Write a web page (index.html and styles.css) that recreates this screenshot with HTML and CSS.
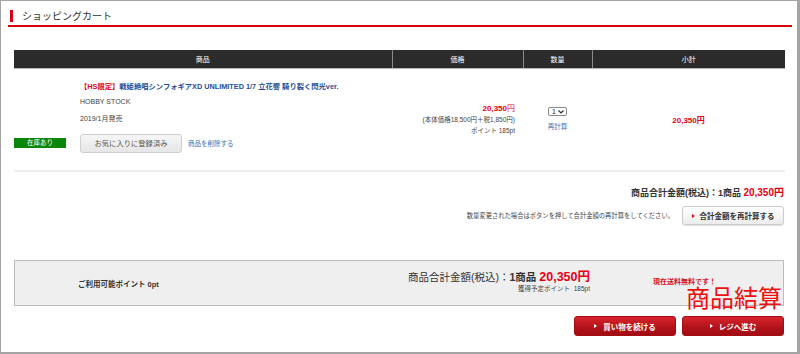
FILE: index.html
```html
<!doctype html>
<html lang="ja">
  <head>
    <meta charset="UTF-8" />
    <meta name="viewport" content="width=device-width, initial-scale=1.0" />
    <title>ショッピングカート</title>
    <link rel="stylesheet" href="styles.css">
  </head>
  <body>
    <div class="cart">
      <h2 class="cart-title">ショッピングカート</h2>

      <table class="cart-table">
        <thead>
          <tr>
            <th class="col-item">商品</th>
            <th class="col-price">価格</th>
            <th class="col-qty">数量</th>
            <th class="col-sub">小計</th>
          </tr>
        </thead>
        <tbody>
          <tr>
            <td class="item">
              <div class="item-grid">
                <a class="item-name" href="#"><span class="tag">【HS限定】</span>戦姫絶唱シンフォギアXD UNLIMITED 1/7 立花響 騎り裂く閃光ver.</a>
                <span class="item-maker">HOBBY STOCK</span>
                <span class="item-date">2019/1月発売</span>
                <span class="stock">在庫あり</span>
                <div class="item-actions">
                  <span class="fav-button">お気に入りに登録済み</span>
                  <a class="link" href="#">商品を削除する</a>
                </div>
              </div>
            </td>
            <td class="price">
              <div class="price-main">20,350<span class="yen">円</span></div>
              <div>(本体価格18,500円＋税1,850円)</div>
              <div>ポイント 185pt</div>
            </td>
            <td class="qty">
              <span class="qty-select">1 <svg width="6" height="4" viewBox="0 0 6 4"><path d="M0.5 0.5 L3 3 L5.5 0.5" fill="none" stroke="#333" stroke-width="1.2"/></svg></span>
              <a class="link" href="#">再計算</a>
            </td>
            <td class="subtotal">20,350円</td>
          </tr>
        </tbody>
      </table>

      <div class="totals">
        <div class="total-line">商品合計金額(税込)：1商品 <span class="amount">20,350円</span></div>
        <div class="recalc-line">
          <span class="recalc-note">数量変更された場合はボタンを押して合計金額の再計算をしてください。</span>
          <span class="recalc-button"><i class="arrow"></i>合計金額を再計算する</span>
        </div>
      </div>

      <div class="summary">
        <div class="summary-points">ご利用可能ポイント 0pt</div>
        <div class="summary-total">
          <div class="summary-amount">商品合計金額(税込)：<b>1商品</b> <span class="amount">20,350円</span></div>
          <div class="summary-earn">獲得予定ポイント&nbsp;&nbsp;185pt</div>
        </div>
        <div class="summary-ship">現在送料無料です！</div>
        <span class="note">商品結算</span>
      </div>

      <div class="actions">
        <a class="red-button" href="#"><i class="arrow"></i>買い物を続ける</a>
        <a class="red-button" href="#"><i class="arrow"></i>レジへ進む</a>
      </div>
    </div>
  </body>
</html>
```
FILE: styles.css
```css
* {
  margin: 0;
  padding: 0;
  box-sizing: border-box;
}
body {
  font-family: "Liberation Sans", "Noto Sans CJK JP", sans-serif;
  color: #333;
  background: #fff;
}
a {
  text-decoration: none;
}
.cart {
  position: relative;
  width: 800px;
  height: 354px;
  border: 1px solid #a4a4a4;
  border-right-width: 3px;
  border-bottom-width: 2px;
}
.cart-title {
  margin: 0 5px 0 7px;
  padding: 8px 0 1px 14px;
  line-height: 15px;
  font-size: 10px;
  font-weight: normal;
  color: #333;
  border-bottom: 2px solid #d7000f;
  position: relative;
}
.cart-title::before {
  content: "";
  position: absolute;
  left: 2px;
  top: 9px;
  width: 3px;
  height: 12px;
  background: #d7000f;
}

/* カート表 */
.cart-table {
  margin: 23px 0 0 13px;
  width: 771px;
  border-collapse: collapse;
  font-size: 7px;
}
.cart-table th {
  height: 18px;
  background: #2b2b2b;
  color: #fff;
  font-weight: normal;
  border-left: 1px solid #8a8a8a;
  border-bottom: 1px solid #b5b5b5;
}
.cart-table th:first-child {
  border-left: none;
}
.col-item { width: 378px; }
.col-price { width: 131px; }
.col-qty { width: 69px; }
.col-sub { width: 193px; }
.cart-table td {
  height: 103px;
  vertical-align: middle;
  border-bottom: 2px solid #eeeeee;
}
.cart-table td.item {
  vertical-align: top;
  padding: 9px 0 0;
}
.item-grid {
  display: grid;
  grid-template-columns: 66px 1fr;
  grid-template-rows: 16px 16px 16px auto;
  align-items: center;
}
.item-name,
.item-maker,
.item-date {
  grid-column: 2;
}
.item-name {
  color: #1f4f98;
  font-weight: bold;
  font-size: 7.3px;
}
.item-name .tag {
  color: #e60012;
}
.item-maker,
.item-date {
  font-size: 7px;
  color: #444;
}
.stock {
  grid-column: 1;
  grid-row: 4;
  margin-top: 8px;
  width: 52px;
  height: 10px;
  line-height: 10px;
  background: #0a860a;
  color: #fff;
  text-align: center;
  font-size: 6.5px;
}
.item-actions {
  grid-column: 2;
  grid-row: 4;
  margin-top: 8px;
  display: flex;
  align-items: center;
  gap: 6px;
}
.fav-button {
  width: 102px;
  height: 19px;
  line-height: 17px;
  text-align: center;
  font-size: 7.3px;
  color: #555;
  border: 1px solid #cfcfcf;
  border-radius: 3px;
  background: linear-gradient(#f6f6f6, #e6e6e6);
}
.link {
  color: #3a6fb0;
  font-size: 6.5px;
}
.price {
  text-align: right;
  padding-right: 8px;
  line-height: 11px;
  font-size: 6.5px;
  color: #444;
}
.price-main {
  color: #e60012;
  font-weight: bold;
  font-size: 8px;
}
.price-main .yen {
  font-weight: normal;
}
.qty {
  text-align: center;
}
.qty-select {
  display: inline-flex;
  align-items: center;
  gap: 2px;
  height: 9px;
  padding: 0 2px 0 3px;
  border: 1px solid #888;
  border-radius: 2px;
  font-size: 7px;
  color: #222;
}
.qty .link {
  display: block;
  margin-top: 5px;
}
.subtotal {
  text-align: center;
  color: #e60012;
  font-weight: bold;
  font-size: 8px;
}

/* 合計 */
.totals {
  margin: 14px 13px 0 0;
  display: flex;
  flex-direction: column;
  align-items: flex-end;
}
.total-line {
  font-size: 9px;
  font-weight: bold;
  line-height: 14px;
  color: #333;
}
.amount {
  color: #e60012;
  font-size: 10px;
}
.recalc-line {
  margin-top: 6px;
  display: flex;
  align-items: center;
  gap: 8px;
}
.recalc-note {
  font-size: 6.3px;
  color: #444;
}
.recalc-button {
  display: flex;
  align-items: center;
  justify-content: center;
  gap: 5px;
  width: 102px;
  height: 19px;
  font-size: 7.5px;
  font-weight: bold;
  color: #333;
  border: 1px solid #cccccc;
  border-radius: 3px;
  background: linear-gradient(#ffffff, #ececec);
  box-shadow: 0 1px 1px rgba(0, 0, 0, 0.12);
}
.recalc-button .arrow {
  border-left-color: #e60012;
}
.arrow {
  display: inline-block;
  width: 0;
  height: 0;
  border-top: 2.5px solid transparent;
  border-bottom: 2.5px solid transparent;
  border-left: 3px solid #fff;
}

/* 集計ボックス */
.summary {
  position: relative;
  margin: 35px 13px 0 13px;
  height: 46px;
  display: grid;
  grid-template-columns: 1fr auto 193px;
  align-items: center;
  background: #efefef;
  border: 1px solid #bcbcbc;
}
.summary-points {
  padding-left: 63px;
  font-size: 7.5px;
  font-weight: bold;
  color: #333;
}
.summary-total {
  text-align: right;
  margin-top: -4px;
}
.summary-amount {
  font-size: 10.5px;
  line-height: 14px;
  color: #333;
}
.summary-amount b {
  font-weight: bold;
}
.summary-amount .amount {
  font-size: 12.5px;
  font-weight: bold;
}
.summary-earn {
  font-size: 6.5px;
  line-height: 9px;
  color: #444;
}
.summary-ship {
  padding-left: 63px;
  font-size: 7px;
  line-height: 9px;
  font-weight: bold;
  color: #d4141c;
  margin-top: -3px;
}
.note {
  position: absolute;
  left: 671px;
  top: 26px;
  font-size: 24px;
  line-height: 24px;
  color: #f01010;
  white-space: nowrap;
}

/* ボタン */
.actions {
  margin: 10px 13px 0 0;
  display: flex;
  justify-content: flex-end;
  gap: 6px;
}
.red-button {
  display: flex;
  align-items: center;
  justify-content: center;
  gap: 6px;
  width: 102px;
  height: 20px;
  font-size: 7.5px;
  font-weight: bold;
  color: #fff;
  border: 1px solid #a30c12;
  border-radius: 3px;
  background: linear-gradient(#d8242c, #b0121a 60%, #a20c12);
}
```
